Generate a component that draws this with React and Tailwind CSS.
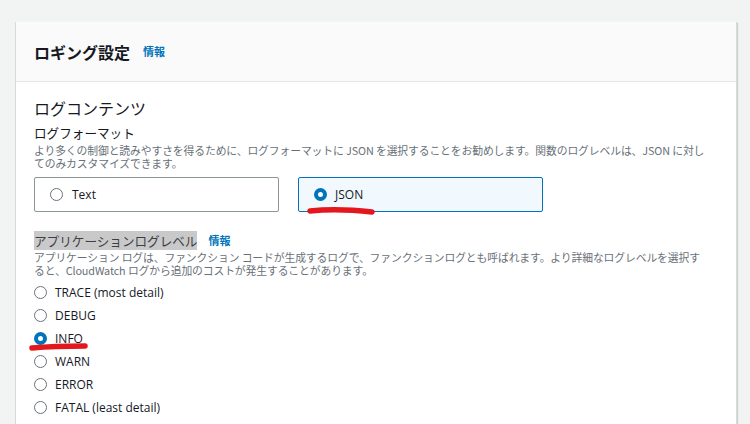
import React from 'react';

const font = "font-['Open_Sans','Noto_Sans_CJK_JP',sans-serif]";
const jp = "font-['Noto_Sans_CJK_JP',sans-serif]";

function Radio({ checked }) {
  return checked ? (
    <span className="inline-block w-[13px] h-[13px] rounded-full border-[4px] border-[#0073bb] bg-white shrink-0" />
  ) : (
    <span className="inline-block w-[13px] h-[13px] rounded-full border-[1.5px] border-[#6b7178] bg-white shrink-0" />
  );
}

function Scribble({ className, w, h, d }) {
  return (
    <svg className={className} width={w} height={h} viewBox={`0 0 ${w} ${h}`} fill="none">
      <path d={d} stroke="#e4181c" strokeWidth="5.5" strokeLinecap="round" />
    </svg>
  );
}

const levels = [
  { label: 'TRACE (most detail)' },
  { label: 'DEBUG' },
  { label: 'INFO', checked: true },
  { label: 'WARN' },
  { label: 'ERROR' },
  { label: 'FATAL (least detail)' },
];

export default function App() {
  return (
    <div className={`w-[750px] h-[424px] overflow-hidden bg-[#f2f3f3] pt-[22px] pl-[15px] ${font}`}>
      <div className="w-[722px] h-[420px] bg-white border-l border-r border-[#d5dbdb] shadow-[1px_1px_1px_rgba(0,28,36,0.15)]">
        <div className="h-[60px] bg-[#fafafa] border-b border-[#e4e7e7] flex items-center px-[18px]">
          <h2 className={`text-[16px] font-bold text-[#16191f] leading-none ${jp}`}>ロギング設定</h2>
          <span className={`ml-[13px] text-[11px] font-bold text-[#0073bb] leading-none ${jp}`}>情報</span>
        </div>

        <div className="px-[18px]">
          <div className={`mt-[16px] h-[20px] text-[16px] leading-[20px] text-[#16191f] ${jp}`}>ログコンテンツ</div>
          <div className={`mt-[6px] h-[18px] text-[12.6px] leading-[18px] text-[#16191f] ${jp}`}>ログフォーマット</div>
          <p className={`mt-[2px] text-[10.8px] leading-[13px] text-[#687078] tracking-[-0.1px] ${jp}`}>
            より多くの制御と読みやすさを得るために、ログフォーマットに JSON を選択することをお勧めします。関数のログレベルは、JSON に対し
            <br />
            てのみカスタマイズできます。
          </p>

          <div className="mt-[7px] flex gap-[19px]">
            <div className="w-[245px] h-[35px] rounded-[2px] border border-[#8c9696] flex items-center pl-[15px] gap-[9px]">
              <Radio />
              <span className="text-[12px] leading-[16px] text-[#16191f]">Text</span>
            </div>
            <div className="relative w-[245px] h-[35px] rounded-[2px] border border-[#0073bb] bg-[#f1f8fe] flex items-center pl-[15px] gap-[8px]">
              <Radio checked />
              <span className="text-[12px] leading-[16px] text-[#16191f]">JSON</span>
              <Scribble className="absolute left-[8px] top-[28px]" w={72} h={10} d="M3 5 Q30 2 65 6" />
            </div>
          </div>

          <div className={`mt-[19px] flex items-center h-[19px] ${jp}`}>
            <span className="bg-[#c9c9c9] h-[19px] leading-[19px] text-[12.6px] text-[#3b4048]">アプリケーションログレベル</span>
            <span className="ml-[11px] text-[11px] leading-[19px] font-bold text-[#0073bb]">情報</span>
          </div>
          <p className={`mt-[1px] text-[10.8px] leading-[13px] text-[#687078] tracking-[-0.1px] ${jp}`}>
            アプリケーション ログは、ファンクション コードが生成するログで、ファンクションログとも呼ばれます。より詳細なログレベルを選択す
            <br />
            ると、CloudWatch ログから追加のコストが発生することがあります。
          </p>

          <div className="mt-[4px] flex flex-col">
            {levels.map((l) => (
              <div key={l.label} className="relative h-[23px] flex items-center gap-[8px]">
                <Radio checked={l.checked} />
                <span className="text-[12px] leading-[16px] text-[#16191f]">{l.label}</span>
                {l.checked && (
                  <Scribble className="absolute left-[-5px] top-[15px]" w={62} h={10} d="M3 6 Q25 4 56 4" />
                )}
              </div>
            ))}
          </div>
        </div>
      </div>
    </div>
  );
}
